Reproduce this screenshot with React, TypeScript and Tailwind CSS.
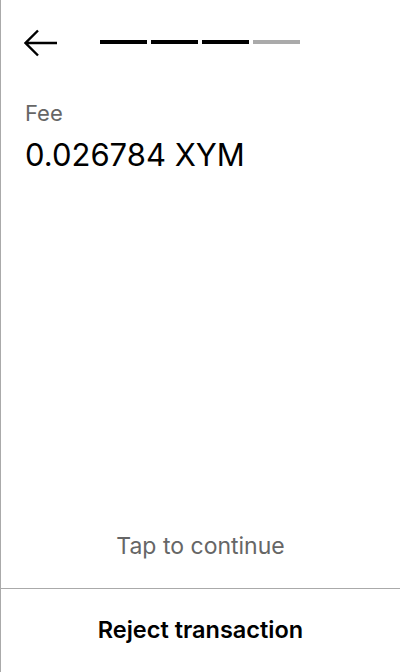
export default function App() {
  const steps = [true, true, true, false];

  return (
    <div
      className="flex h-[672px] w-[400px] flex-col border-l border-[#aaaaaa] bg-white"
      style={{ fontFamily: 'Inter, "Noto Sans", sans-serif' }}
    >
      <header className="flex h-[86px] items-center pl-[23px] pb-[1px]">
        <button className="flex h-[28px] w-[34px] items-center justify-center">
          <svg width="34" height="28" viewBox="0 0 34 28" fill="none">
            <path d="M33 14H2M14 1.5L1.5 14L14 26.5" stroke="#000" strokeWidth="2.4" />
          </svg>
        </button>
        <div className="ml-[42px] flex gap-1 pb-[2px]">
          {steps.map((done, i) => (
            <div key={i} className={`h-1 w-[47px] ${done ? 'bg-black' : 'bg-[#aaaaaa]'}`} />
          ))}
        </div>
      </header>

      <main className="flex-1 px-6 pt-[14px]">
        <p className="text-[22px] leading-[27px] text-[#666666]">Fee</p>
        <p className="mt-[9px] text-[31px] leading-[38px] text-black">0.026784 XYM</p>
      </main>

      <button className="pb-[28px] text-center text-[23px] leading-[28px] text-[#666666]">
        Tap to continue
      </button>

      <button className="h-[84px] border-t border-[#aaaaaa] pb-[2px] text-center text-[23.5px] font-semibold text-black">
        Reject transaction
      </button>
    </div>
  );
}
